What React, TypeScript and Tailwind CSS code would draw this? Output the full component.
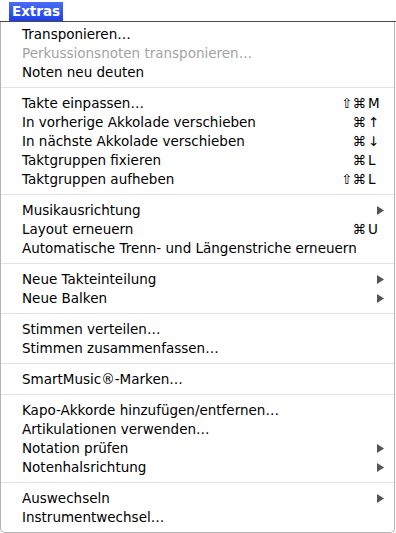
import React from "react";

type Item =
  | { sep: true }
  | { sep?: false; label: string; mods?: string; keyName?: string; sub?: boolean; disabled?: boolean };

const items: Item[] = [
  { label: "Transponieren…" },
  { label: "Perkussionsnoten transponieren…", disabled: true },
  { label: "Noten neu deuten" },
  { sep: true },
  { label: "Takte einpassen…", mods: "⇧⌘", keyName: "M" },
  { label: "In vorherige Akkolade verschieben", mods: "⌘", keyName: "↑" },
  { label: "In nächste Akkolade verschieben", mods: "⌘", keyName: "↓" },
  { label: "Taktgruppen fixieren", mods: "⌘", keyName: "L" },
  { label: "Taktgruppen aufheben", mods: "⇧⌘", keyName: "L" },
  { sep: true },
  { label: "Musikausrichtung", sub: true },
  { label: "Layout erneuern", mods: "⌘", keyName: "U" },
  { label: "Automatische Trenn- und Längenstriche erneuern" },
  { sep: true },
  { label: "Neue Takteinteilung", sub: true },
  { label: "Neue Balken", sub: true },
  { sep: true },
  { label: "Stimmen verteilen…" },
  { label: "Stimmen zusammenfassen…" },
  { sep: true },
  { label: "SmartMusic®-Marken…" },
  { sep: true },
  { label: "Kapo-Akkorde hinzufügen/entfernen…" },
  { label: "Artikulationen verwenden…" },
  { label: "Notation prüfen", sub: true },
  { label: "Notenhalsrichtung", sub: true },
  { sep: true },
  { label: "Auswechseln", sub: true },
  { label: "Instrumentwechsel…" },
];

export default function App() {
  return (
    <div className="w-[396px] h-[533px] bg-white overflow-hidden font-['DejaVu_Sans',sans-serif] text-[13.5px] text-black">
      {/* menu bar */}
      <div className="h-[22px] flex items-start border-b border-[#4a4a4a] bg-white">
        <div className="ml-[9px] mt-[2px] h-[19px] w-[54px] flex items-center justify-center bg-gradient-to-b from-[#4a6cf7] to-[#1c3ee9] text-white font-bold text-[13.5px]">
          Extras
        </div>
      </div>

      {/* dropdown */}
      <div className="w-[395px] h-[511px] bg-white border-l border-r border-b border-[#b4b4b4] rounded-b-[5px] pt-[3px] pb-[5px]">
        {items.map((it, i) =>
          it.sep ? (
            <div key={i} className="h-[12px] pt-[5px]">
              <div className="h-px bg-[#e2e2e2]" />
            </div>
          ) : (
            <div key={i} className="h-[19px] flex items-center pl-[21px] pr-[9px]">
              <span className={it.disabled ? "flex-1 whitespace-nowrap text-[#a3a3a3]" : "flex-1 whitespace-nowrap"}>
                {it.label}
              </span>
              {it.mods && (
                <span className="flex">
                  <span className="w-[30px] text-right">{it.mods}</span>
                  <span className="w-[19px] pl-[2px]">{it.keyName}</span>
                </span>
              )}
              {it.sub && (
                <svg width="7" height="9" viewBox="0 0 7 9" className="mr-[1px]">
                  <path d="M0 0 L7 4.5 L0 9 Z" fill="#555" />
                </svg>
              )}
            </div>
          )
        )}
      </div>
    </div>
  );
}
